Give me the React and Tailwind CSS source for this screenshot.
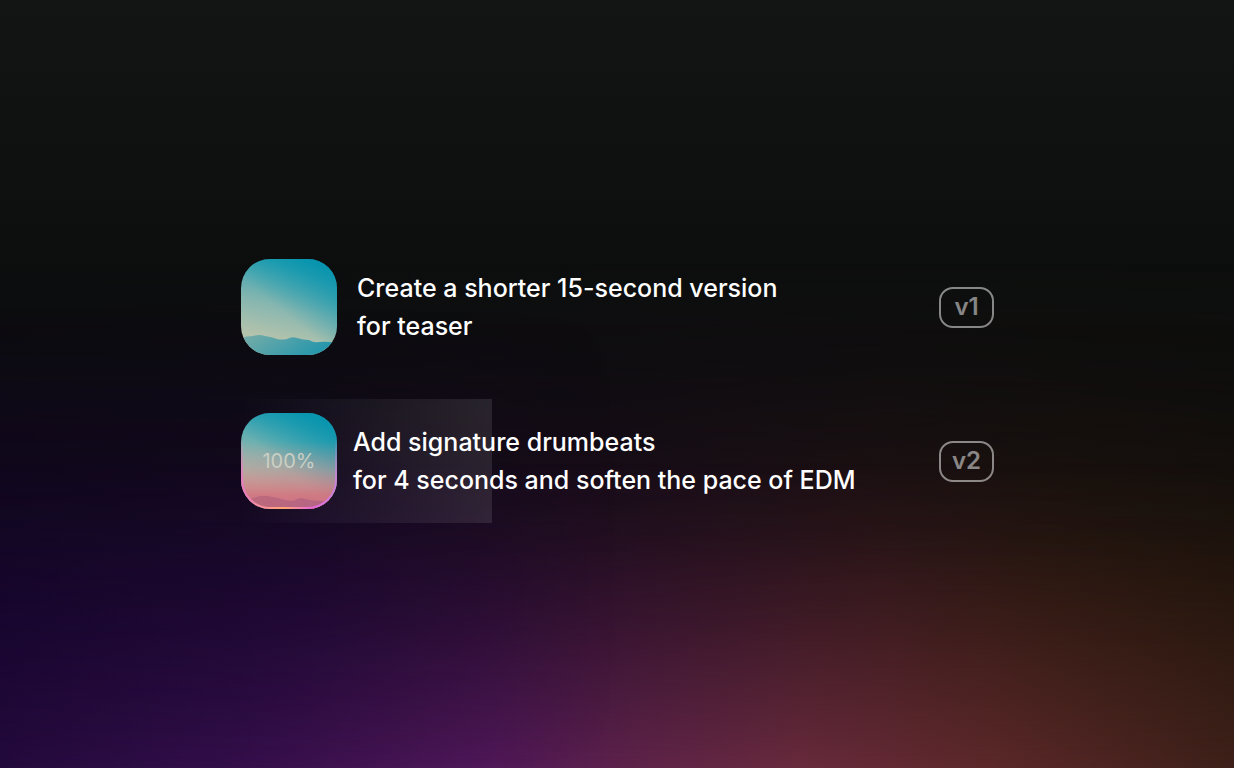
import React from 'react';

function Backdrop() {
  return (
    <div className="absolute inset-0 bg-[linear-gradient(180deg,#131514_0%,#0d0f0e_32%,#0b0c0d_50%,#0a090b_100%)]">
      <div className="absolute inset-0 bg-[linear-gradient(90deg,#17052f_0%,#1e0932_25%,#2c1029_50%,#35191b_72%,#2e1a10_85%,#25170c_100%)] [mask-image:linear-gradient(180deg,transparent_34%,rgba(0,0,0,0.12)_47%,rgba(0,0,0,0.3)_58%,rgba(0,0,0,0.6)_70%,rgba(0,0,0,0.9)_80%,black_90%)]" />
      <div className="absolute inset-0 bg-[linear-gradient(90deg,#240b3d_0%,#350f4b_20%,#501858_40%,#5f2349_52%,#682a3c_65%,#5c2829_80%,#3d2019_100%)] [mask-image:linear-gradient(180deg,transparent_60%,rgba(0,0,0,0.08)_70%,rgba(0,0,0,0.25)_80%,rgba(0,0,0,0.6)_90%,black_100%)]" />
      <div className="absolute inset-0 bg-[linear-gradient(90deg,rgba(22,5,44,0.3)_0%,rgba(22,5,44,0.25)_25%,transparent_50%)] [mask-image:linear-gradient(180deg,transparent_40%,black_75%,transparent_100%)]" />
    </div>
  );
}

function Thumbnail({ progress }) {
  const warm = progress !== undefined;
  return (
    <div className="relative size-24 shrink-0">
      <svg viewBox="0 0 96 96" className="size-24" aria-hidden="true">
        <defs>
          <linearGradient id="sky" x1="0.6" y1="0" x2="0.4" y2="0.85">
            <stop offset="0" stopColor="#1a9db1" />
            <stop offset="0.25" stopColor="#4aa8b1" />
            <stop offset="0.6" stopColor="#86b6b0" />
            <stop offset="1" stopColor="#b4c3ac" />
          </linearGradient>
          <linearGradient id="hills" x1="0" y1="0" x2="1" y2="0.3">
            <stop offset="0" stopColor="#79ada8" />
            <stop offset="1" stopColor="#2596ac" />
          </linearGradient>
          <linearGradient id="shade" x1="0.5" y1="0.6" x2="0.95" y2="0.05">
            <stop offset="0" stopColor="#0091ad" stopOpacity="0" />
            <stop offset="1" stopColor="#0091ad" stopOpacity="0.8" />
          </linearGradient>
          <linearGradient id="glow" x1="0" y1="0" x2="0" y2="1">
            <stop offset="0.3" stopColor="#d9848a" stopOpacity="0" />
            <stop offset="0.58" stopColor="#d9848a" stopOpacity="0.35" />
            <stop offset="0.85" stopColor="#d56f7c" stopOpacity="0.85" />
            <stop offset="1" stopColor="#d0607c" stopOpacity="0.9" />
          </linearGradient>
          <linearGradient id="ridge" x1="0" y1="0" x2="1" y2="0">
            <stop offset="0" stopColor="#be6a7b" />
            <stop offset="1" stopColor="#b46486" />
          </linearGradient>
          <linearGradient id="rim" x1="0" y1="0" x2="1" y2="0">
            <stop offset="0" stopColor="#e879c8" />
            <stop offset="0.2" stopColor="#f7919f" />
            <stop offset="0.45" stopColor="#ffa56f" />
            <stop offset="0.75" stopColor="#e865e0" />
            <stop offset="1" stopColor="#c983dc" />
          </linearGradient>
          <linearGradient id="rimFade" x1="0" y1="0" x2="0" y2="1">
            <stop offset="0.25" stopColor="#000" />
            <stop offset="0.75" stopColor="#fff" />
          </linearGradient>
          <mask id="rimMask">
            <rect width="96" height="96" fill="url(#rimFade)" />
          </mask>
          <clipPath id="tile">
            <rect width="96" height="96" rx="29" />
          </clipPath>
        </defs>
        <g clipPath="url(#tile)">
          <rect width="96" height="96" fill="url(#sky)" />
          <rect width="96" height="96" fill="url(#shade)" />
          {warm ? (
            <>
              <rect width="96" height="96" fill="url(#glow)" />
              <path
                d="M0 90 L10 86 Q18 82 26 83 Q34 84 40 86 Q46 88 52 88 Q58 84 64 86 Q72 88 80 88 L96 90 V96 H0Z"
                fill="url(#ridge)"
              />
              <rect
                x="1"
                y="1"
                width="94"
                height="94"
                rx="28"
                fill="none"
                stroke="url(#rim)"
                strokeWidth="2"
                mask="url(#rimMask)"
              />
            </>
          ) : (
            <path
              d="M0 79 Q6 77 12 77 Q18 75 24 77 Q31 78 36 80 Q42 81 46 80 Q51 77 56 79 Q62 81 68 81 Q73 84 78 83 Q86 82 96 84 V96 H0Z"
              fill="url(#hills)"
            />
          )}
        </g>
      </svg>
      {warm && (
        <span className="absolute inset-0 flex items-center justify-center text-xl text-[#c9cfc4]">{progress}%</span>
      )}
    </div>
  );
}

function VersionRow({ lines, version, progress, className }) {
  return (
    <li className={`relative flex h-[124px] items-center ${className}`}>
      {progress !== undefined && (
        <div className="absolute inset-y-0 left-0 w-1/3 bg-linear-to-r from-white/0 to-white/10" />
      )}
      <Thumbnail progress={progress} />
      <p className="relative flex-1 text-[25px] leading-[38px] font-medium text-white">
        {lines[0]}
        <br />
        {lines[1]}
      </p>
      <span className="flex h-[41px] w-[55px] shrink-0 items-center justify-center rounded-[14px] border-2 border-white/50 text-2xl font-semibold text-white/50">
        {version}
      </span>
    </li>
  );
}

export default function App() {
  return (
    <main className="relative flex min-h-screen items-center justify-center overflow-hidden pl-px font-['Inter',sans-serif]">
      <Backdrop />
      <ul className="relative flex w-full max-w-[753px] flex-col gap-[30px]">
        <VersionRow className="gap-5" lines={['Create a shorter 15-second version', 'for teaser']} version="v1" />
        <VersionRow
          className="gap-4"
          lines={['Add signature drumbeats', 'for 4 seconds and soften the pace of EDM']}
          version="v2"
          progress={100}
        />
      </ul>
    </main>
  );
}
